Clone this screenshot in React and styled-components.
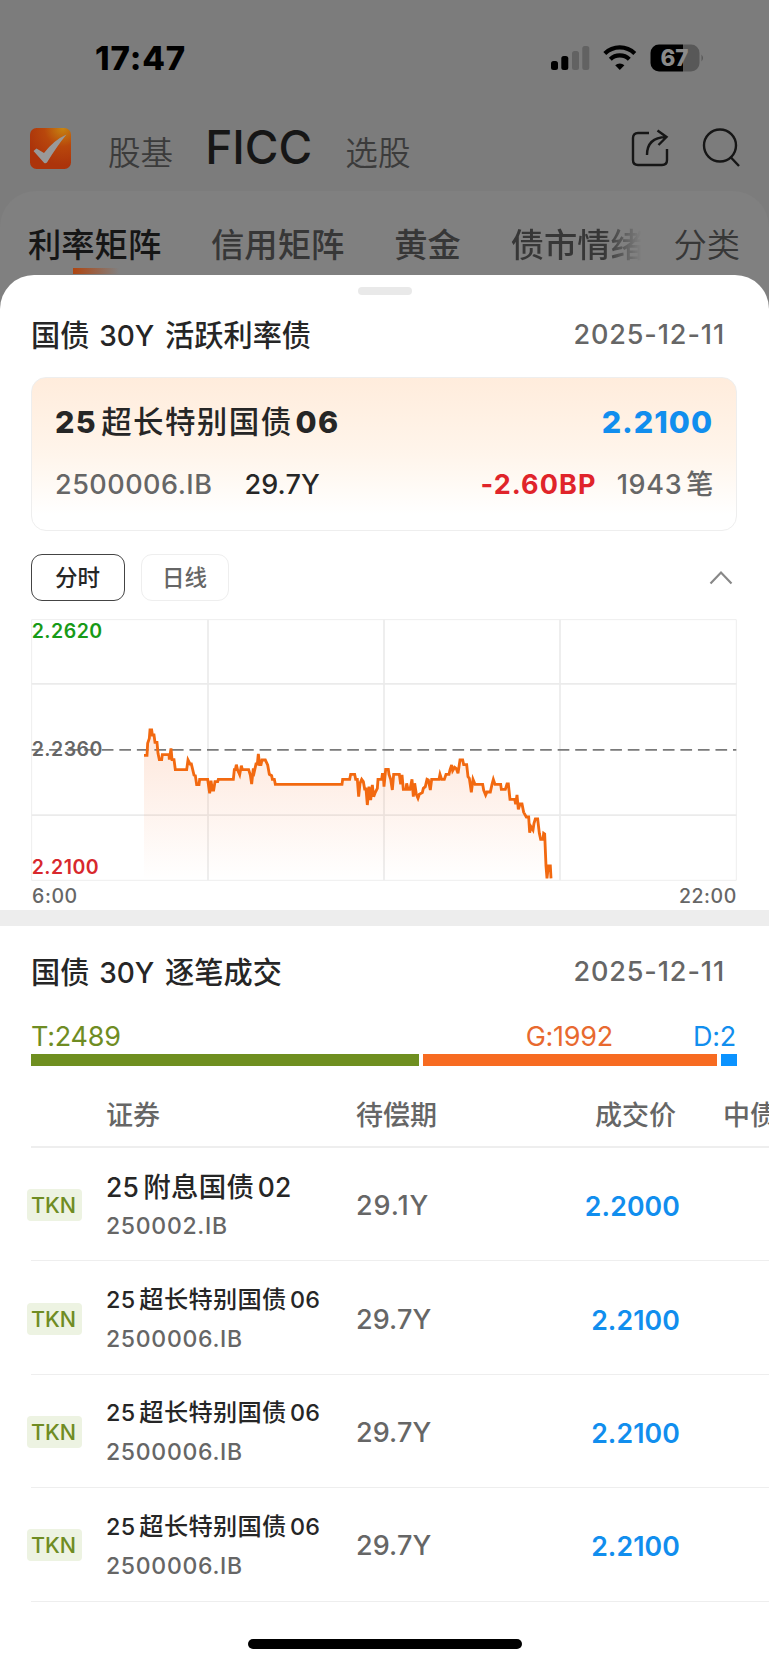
import React from "react"
import styled, { createGlobalStyle } from "styled-components"

const color = {
  ink: "#262626",
  grey: "#666",
  blue: "#118eee",
  red: "#e0242a",
  green: "#6f8c23",
  orange: "#f76b21",
  line: "#eee",
}

const GlobalStyle = createGlobalStyle`
  * {
    box-sizing: border-box;
  }

  body {
    margin: 0;
    background: #808080;
    font-family: Inter, "Noto Sans CJK SC", sans-serif;
    color: ${color.ink};
  }
`

const Screen = styled.div`
  width: 769px;
  height: 1665px;
  overflow: hidden;
  display: flex;
  flex-direction: column;
  background: #7c7c7c;
`

/* Dimmed page behind the sheet */

const StatusBar = styled.div`
  height: 116px;
  padding: 0 64px 0 95px;
  display: flex;
  justify-content: space-between;
  align-items: center;
  flex-shrink: 0;
`

const Clock = styled.div`
  font-size: 33px;
  font-weight: 800;
  line-height: 40px;
  letter-spacing: 0.9px;
  padding-bottom: 1px;
  color: #000;
`

const NavBar = styled.div`
  height: 75px;
  padding: 0 28px 0 30px;
  display: flex;
  align-items: flex-start;
  flex-shrink: 0;
`

const Logo = styled.svg`
  margin-top: 12px;
  margin-right: 37px;
`

const NavItem = styled.div`
  font-size: ${(p) => (p.$active ? "46px" : "32.6px")};
  font-weight: ${(p) => (p.$active ? 500 : 350)};
  line-height: ${(p) => (p.$active ? "63px" : "74px")};
  color: ${(p) => (p.$active ? "#161616" : "#3b3b3b")};
  margin-right: ${(p) => (p.$active ? "33px" : "32px")};
`

const NavIcons = styled.div`
  margin-left: auto;
  margin-top: 11px;
  display: flex;
  gap: 31px;
`

const TabPanel = styled.div`
  height: 124px;
  padding: 32px 29px 0 28px;
  display: flex;
  align-items: flex-start;
  flex-shrink: 0;
  background: #808080;
  border-radius: 36px 36px 0 0;
`

const Tab = styled.div`
  font-size: 33.3px;
  font-weight: ${(p) => (p.$light ? 350 : 500)};
  line-height: 44px;
  white-space: nowrap;
  color: ${(p) => (p.$active ? "#161616" : "#373737")};
  margin-right: 49.9px;

  &:last-child {
    margin: 0 0 0 auto;
  }
`

const FadedTab = styled(Tab)`
  margin-right: 0;
  mask-image: linear-gradient(90deg, #000 70%, transparent 98%);
`

const Underline = styled.div`
  width: 46px;
  height: 6px;
  margin: 1px 0 0 45px;
  background: linear-gradient(90deg, #b04510, #808080);
`

/* Sheet */

const Sheet = styled.div`
  flex: 1;
  margin-top: -40px;
  background: #fff;
  border-radius: 34px 34px 0 0;
  display: flex;
  flex-direction: column;
`

const Handle = styled.div`
  width: 54px;
  height: 8px;
  margin: 12px auto 0;
  border-radius: 4px;
  background: #e9e9e9;
`

const TitleRow = styled.div`
  height: ${(p) => p.$height}px;
  padding: 0 44px 3px 31px;
  display: flex;
  justify-content: space-between;
  align-items: center;
`

const Title = styled.div`
  font-size: 29.2px;
  font-weight: 450;
  line-height: 40px;
  padding-top: 3px;
  white-space: pre;
`

const TitleLatin = styled.span`
  font-size: 28px;
  margin: 0 3px 0 2px;
`

const DateText = styled.div`
  font-size: 27px;
  font-weight: 500;
  letter-spacing: 0.9px;
  color: ${color.grey};
`

const Card = styled.div`
  height: 154px;
  margin: 0 32px 0 31px;
  padding: 22px 23px 0;
  border: 1px solid ${color.line};
  border-radius: 15px;
  background: linear-gradient(#ffecdc, #fff5eb 50%, #fff 90%);
`

const CardRow = styled.div`
  display: flex;
  align-items: center;
  height: ${(p) => p.$height}px;
`

const Name = styled.div`
  font-size: ${(p) => p.$size}px;
  font-weight: ${(p) => p.$weight};
  line-height: 38px;
  letter-spacing: ${(p) => p.$spacing}px;
  white-space: nowrap;
`

const Han = styled.span`
  font-family: "Noto Sans CJK SC", sans-serif;
  font-size: ${(p) => p.$scale || 1}em;
  font-weight: 500;
  line-height: 1;
  margin: 0 ${(p) => p.$after}px 0 ${(p) => p.$before}px;
`

const Value = styled.div`
  font-size: ${(p) => p.$size || 27}px;
  font-weight: ${(p) => p.$weight || 500};
  line-height: 34px;
  letter-spacing: ${(p) => p.$spacing ?? 0.9}px;
  color: ${(p) => p.$color || color.grey};
  margin-left: ${(p) => p.$left || 0};
  white-space: nowrap;
`

const Controls = styled.div`
  height: 88px;
  padding: 23px 36px 0 31px;
  display: flex;
  align-items: flex-start;
  gap: 16px;
`

const Pill = styled.button`
  width: ${(p) => (p.$active ? 94 : 88)}px;
  height: 47px;
  padding: 0 1px 3px 0;
  border: 1px solid ${(p) => (p.$active ? "#444" : color.line)};
  border-radius: 11px;
  background: #fff;
  font: 500 22.5px/42px "Noto Sans CJK SC", sans-serif;
  color: ${(p) => (p.$active ? color.ink : color.grey)};
`

const Chevron = styled.svg`
  margin: 16px 0 0 auto;
`

const ChartBox = styled.div`
  height: 262px;
  margin-left: 31px;
`

const AxisRow = styled.div`
  height: 29px;
  padding: 0 32px 0 32px;
  display: flex;
  justify-content: space-between;
  align-items: center;
`

const AxisText = styled.div`
  font-size: 19.5px;
  font-weight: 550;
  letter-spacing: 0.6px;
  color: ${color.grey};
`

const Divider = styled.div`
  height: 16px;
  background: #ededed;
`

const Counts = styled.div`
  height: 34px;
  padding: 0 33px 2px 31px;
  display: flex;
  align-items: center;
`

const Count = styled.div`
  font-size: 27px;
  letter-spacing: -0.25px;
  color: ${(p) => p.$color};
  margin-left: ${(p) => p.$left || 0};
`

const Bars = styled.div`
  height: 12px;
  padding: 0 32px 0 31px;
  display: flex;
  gap: 4px;
`

const Bar = styled.div`
  width: ${(p) => p.$width}px;
  background: ${(p) => p.$color};
`

const HeadRow = styled.div`
  height: 82px;
  margin-left: 31px;
  padding-top: 16px;
  display: grid;
  grid-template-columns: 75px 250px 320px 1fr;
  align-items: center;
  border-bottom: 2px solid ${color.line};
  font: 500 27px/40px "Noto Sans CJK SC", sans-serif;
  color: ${color.grey};
`

const HeadPair = styled.div`
  display: flex;
  justify-content: space-between;
`

const LastHead = styled.div`
  padding-left: 47px;
  white-space: nowrap;
`

const Row = styled.div`
  height: 113.4px;
  margin-left: 31px;
  padding-top: 2px;
  display: grid;
  grid-template-columns: 75px 250px 104px 220px;
  align-items: center;
  border-bottom: 1px solid ${color.line};
`

const Cell = styled(Value)`
  padding-top: 2px;
  text-align: ${(p) => p.$align || "left"};
`

const Tag = styled.div`
  width: 55px;
  height: 32px;
  margin-left: -4px;
  padding-right: 2px;
  border-radius: 4px;
  background: #edf3e2;
  color: ${color.green};
  font-size: 21.5px;
  font-weight: 450;
  line-height: 32px;
  text-align: center;
`

const Security = styled.div`
  display: flex;
  flex-direction: column;
  gap: 3px;
`

const HomeBar = styled.div`
  width: 274px;
  height: 10px;
  margin: 37px auto 0;
  border-radius: 5px;
  background: #000;
`

// Intraday prices, in thirds of a pixel from the chart's top left corner
const line =
  "339,409 348,409 350,373 355,358 357,333 362,333 364,348 369,348 372,370 378,370 381,403 385,422 392,422 394,407 414,407 415,422 420,388 423,422 429,422 433,452 467,452 471,423 477,435 481,435 489,468 493,470 497,497 504,497 506,481 530,481 536,523 540,485 544,513 548,513 552,488 560,488 562,481 607,481 610,452 613,452 616,437 620,453 626,467 631,440 634,452 653,452 658,468 662,495 667,448 670,458 675,435 679,435 682,405 686,437 690,437 693,423 703,423 710,438 715,466 722,470 724,481 730,481 733,496 933,496 935,481 956,481 959,466 971,466 974,481 979,481 983,533 987,493 992,481 997,488 1001,510 1005,510 1009,558 1014,503 1019,543 1024,498 1028,533 1033,520 1039,508 1041,481 1052,481 1054,466 1057,466 1059,503 1064,451 1072,451 1074,466 1079,481 1084,513 1088,466 1105,466 1109,496 1113,468 1117,511 1125,511 1127,493 1131,511 1137,511 1143,481 1147,533 1151,493 1156,526 1161,538 1165,526 1174,521 1177,508 1183,503 1188,481 1192,483 1198,513 1202,481 1224,481 1227,466 1232,481 1240,481 1245,466 1254,466 1257,453 1262,438 1265,455 1271,445 1276,449 1281,463 1287,423 1295,423 1298,437 1307,437 1311,473 1315,478 1321,520 1326,481 1332,496 1355,496 1358,513 1364,528 1368,519 1378,519 1383,496 1387,481 1392,496 1409,496 1411,511 1423,511 1428,495 1432,495 1437,541 1451,541 1454,556 1458,528 1462,571 1467,555 1473,555 1478,580 1486,594 1493,594 1496,641 1500,623 1506,633 1509,613 1513,600 1520,600 1525,643 1529,661 1536,661 1538,643 1541,645 1545,741 1548,778 1552,741 1558,741 1560,778"

const rows = [
  { names: ["25", "附息国债", "02"], size: 26.4, code: "250002.IB", term: "29.1Y", price: "2.2000" },
  { names: ["25", "超长特别国债", "06"], size: 23.3, code: "2500006.IB", term: "29.7Y", price: "2.2100" },
  { names: ["25", "超长特别国债", "06"], size: 23.3, code: "2500006.IB", term: "29.7Y", price: "2.2100" },
  { names: ["25", "超长特别国债", "06"], size: 23.3, code: "2500006.IB", term: "29.7Y", price: "2.2100" },
]

const StatusIcons = () => (
  <svg width="154" height="28" viewBox="0 0 154 28">
    <rect x="0" y="17" width="7" height="9" rx="2.5" />
    <rect x="10.3" y="12" width="7" height="14" rx="2.5" />
    <g fill="#626262">
      <rect x="21" y="7" width="7" height="19" rx="2.5" />
      <rect x="31.3" y="2" width="7" height="24" rx="2.5" />
    </g>
    <g fill="none" stroke="#000" strokeWidth="4.2">
      <path d="M53.8 9.5a21.5 21.5 0 0 1 30 0" />
      <path d="M59.3 15.2a13.6 13.6 0 0 1 19 0" />
    </g>
    <path d="M68.8 26l-4.6-4.7a6.8 6.8 0 0 1 9.2 0z" />
    <clipPath id="cell">
      <rect x="99.5" y="0.5" width="49" height="27" rx="8.5" />
    </clipPath>
    <g clipPath="url(#cell)">
      <rect x="99" width="33" height="28" />
      <rect x="132" width="18" height="28" fill="#585858" />
    </g>
    <path d="M150.5 10.5q3 3.5 0 7z" fill="#585858" />
    <text x="123.500" y="22" fontSize="22.500" fontWeight="800" textAnchor="middle" fill="#8a8a8a">
      67
    </text>
  </svg>
)

const Chart = () => (
  <svg width="706" height="262" viewBox="0 0 2118 786">
    <defs>
      <linearGradient id="fade" x1="0" y1="0" x2="0" y2="1">
        <stop offset="0" stopColor="#f7651a" stopOpacity="0.16" />
        <stop offset="1" stopColor="#f7651a" stopOpacity="0" />
      </linearGradient>
    </defs>
    <path d="M2 2h2114v782H2z" fill="none" stroke="#eee" strokeWidth="3" />
    <path d="M2 194.500h2114M2 588.500h2114M531 2v782M1059 2v782M1587 2v782" stroke="#ebebeb" strokeWidth="5" />
    <path d="M2 392.500H2116" stroke="#7a7a7a" strokeWidth="5" strokeDasharray="35 17.600" />
    <polygon points={`339,784 ${line} 1560,784`} fill="url(#fade)" />
    <polyline points={line} fill="none" stroke="#f26910" strokeWidth="8.5" />
    <g fontSize="58.500" fontWeight="600" letterSpacing="1.500">
      <text x="2" y="57" fill="#179a17">2.2620</text>
      <text x="2" y="411" fill="#666">2.2360</text>
      <text x="2" y="765" fill="#d8282d">2.2100</text>
    </g>
  </svg>
)

const SecurityName = ({ names, before = 4, after = 3.5, scale, ...rest }) => (
  <Name {...rest}>
    {names[0]}
    <Han $before={before} $after={after} $scale={scale}>
      {names[1]}
    </Han>
    {names[2]}
  </Name>
)

const App = () => (
  <Screen>
    <GlobalStyle />
    <StatusBar>
      <Clock>17:47</Clock>
      <StatusIcons />
    </StatusBar>
    <NavBar>
      <Logo width="41" height="41" viewBox="0 0 41 41">
        <defs>
          <radialGradient id="logo" cx="0.8" cy="0" r="0.9">
            <stop offset="0" stopColor="#c78510" />
            <stop offset="0.5" stopColor="#b8470c" />
            <stop offset="1" stopColor="#ac340b" />
          </radialGradient>
        </defs>
        <rect width="41" height="41" rx="6.500" fill="url(#logo)" />
        <path d="M3.500 23l3-2.500 7.500 4.500Q24 12 36.500 6.500 27 18 17 34.500q-1.500 1.500-3 .2z" fill="#999" />
      </Logo>
      <NavItem>股基</NavItem>
      <NavItem $active>FICC</NavItem>
      <NavItem>选股</NavItem>
      <NavIcons>
        <svg width="40" height="42" viewBox="0 0 40 42" fill="none" stroke="#161616" strokeWidth="2.400">
          <path d="M19 6H8Q3 6 3 11v22q0 5 5 5h24q5 0 5-5V22" />
          <path d="M17 28Q17 10.500 36 10M27.500 3.500l9 6.500-8 8" />
        </svg>
        <svg width="40" height="42" viewBox="0 0 40 42" fill="none" stroke="#161616" strokeWidth="2.400">
          <circle cx="19" cy="18.500" r="16" />
          <path d="M29.500 30l8.500 9" />
        </svg>
      </NavIcons>
    </NavBar>
    <TabPanel>
      <Tab $active>
        利率矩阵
        <Underline />
      </Tab>
      <Tab>信用矩阵</Tab>
      <Tab>黄金</Tab>
      <FadedTab>债市情绪</FadedTab>
      <Tab $light>分类</Tab>
    </TabPanel>

    <Sheet>
      <Handle />
      <TitleRow $height={82}>
        <Title>
          国债 <TitleLatin>30Y</TitleLatin> 活跃利率债
        </Title>
        <DateText>2025-12-11</DateText>
      </TitleRow>
      <Card>
        <CardRow $height={44}>
          <SecurityName
            names={["25", "超长特别国债", "06"]}
            after={3}
            $size={30.5}
            $weight={800}
            $spacing={1.4}
          />
          <Value $size={30.5} $weight={800} $spacing={1} $color={color.blue} $left="auto">
            2.2100
          </Value>
        </CardRow>
        <CardRow $height={82}>
          <Value $spacing={0.5}>2500006.IB</Value>
          <Value $color={color.ink} $left="32px" $spacing={0.1}>
            29.7Y
          </Value>
          <Value $weight={750} $color={color.red} $left="auto" $spacing={1.1}>
            -2.60BP
          </Value>
          <Value $left="20px" $spacing={0.7}>
            1943
            <Han $before={4} $after={-1}>
              笔
            </Han>
          </Value>
        </CardRow>
      </Card>
      <Controls>
        <Pill $active>分时</Pill>
        <Pill>日线</Pill>
        <Chevron width="24" height="15" viewBox="0 0 24 15" fill="none" stroke="#888" strokeWidth="2.200">
          <path d="M1.500 13.500L12 2.500l10.500 11" />
        </Chevron>
      </Controls>
      <ChartBox>
        <Chart />
      </ChartBox>
      <AxisRow>
        <AxisText>6:00</AxisText>
        <AxisText>22:00</AxisText>
      </AxisRow>
      <Divider />
      <TitleRow $height={94}>
        <Title>
          国债 <TitleLatin>30Y</TitleLatin> 逐笔成交
        </Title>
        <DateText>2025-12-11</DateText>
      </TitleRow>
      <Counts>
        <Count $color={color.green}>T:2489</Count>
        <Count $color="#e8692f" $left="auto">
          G:1992
        </Count>
        <Count $color={color.blue} $left="80px">
          D:2
        </Count>
      </Counts>
      <Bars>
        <Bar $width={388} $color="#6f8f20" />
        <Bar $width={294} $color={color.orange} />
        <Bar $width={16} $color="#0b93ff" />
      </Bars>
      <HeadRow>
        <div />
        <div>证券</div>
        <HeadPair>
          <span>待偿期</span>
          <span>成交价</span>
        </HeadPair>
        <LastHead>中债</LastHead>
      </HeadRow>
      {rows.map((row, i) => (
        <Row key={i}>
          <Tag>TKN</Tag>
          <Security>
            <SecurityName names={row.names} scale={1.04} $size={row.size} $weight={550} $spacing={0.3} />
            <Value $size={23} $spacing={0.7}>
              {row.code}
            </Value>
          </Security>
          <Cell $spacing={row.term === "29.7Y" ? 0.1 : 0.9}>{row.term}</Cell>
          <Cell $size={26.7} $weight={600} $spacing={0.1} $color={color.blue} $align="right">
            {row.price}
          </Cell>
        </Row>
      ))}
      <HomeBar />
    </Sheet>
  </Screen>
)

export default App
